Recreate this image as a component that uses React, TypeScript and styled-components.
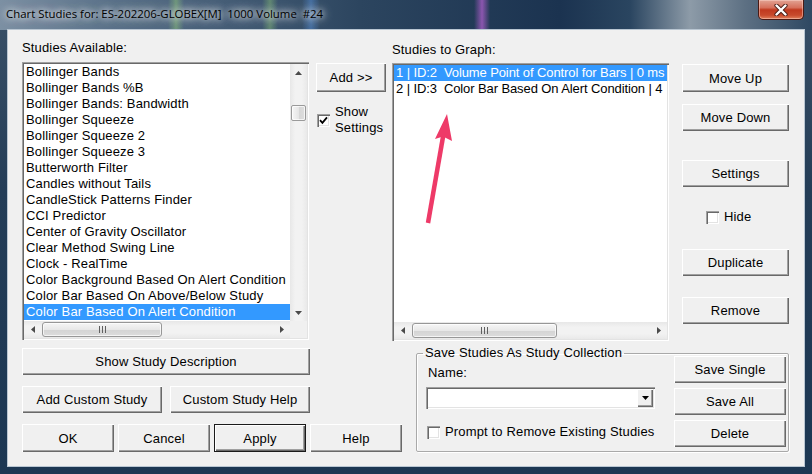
import React from 'react';
import styled, { createGlobalStyle } from 'styled-components';

const GlobalStyle = createGlobalStyle`
  html, body {
    margin: 0;
    padding: 0;
    background: #fff;
  }
  body {
    width: 812px;
    height: 474px;
    overflow: hidden;
    font-family: "Liberation Sans", Arial, sans-serif;
  }
`;

const available = [
  'Bollinger Bands',
  'Bollinger Bands %B',
  'Bollinger Bands: Bandwidth',
  'Bollinger Squeeze',
  'Bollinger Squeeze 2',
  'Bollinger Squeeze 3',
  'Butterworth Filter',
  'Candles without Tails',
  'CandleStick Patterns Finder',
  'CCI Predictor',
  'Center of Gravity Oscillator',
  'Clear Method Swing Line',
  'Clock - RealTime',
  'Color Background Based On Alert Condition',
  'Color Bar Based On Above/Below Study',
  'Color Bar Based On Alert Condition',
];

const toGraph = [
  '1 | ID:2  Volume Point of Control for Bars | 0 ms',
  '2 | ID:3  Color Bar Based On Alert Condition | 4',
];

const Window = styled.div`
  position: relative;
  width: 812px;
  height: 474px;
  display: flex;
  flex-direction: column;
  background: linear-gradient(180deg, #3a5168 0, #243d57 40%, #1c3753 100%);
  font-size: 13px;
  letter-spacing: 0.15px;
  color: #000;
`;

const TitleBar = styled.div`
  height: 30px;
  flex-shrink: 0;
  display: flex;
  justify-content: space-between;
  align-items: flex-start;
  padding: 0 8px 0 6px;
  box-sizing: border-box;
  background:
    linear-gradient(90deg, transparent 168px, rgba(150, 210, 120, 0.45) 176px, transparent 184px),
    linear-gradient(90deg, transparent 262px, rgba(150, 210, 120, 0.4) 270px, transparent 278px),
    linear-gradient(90deg, transparent 302px, rgba(90, 150, 230, 0.45) 311px, transparent 320px),
    linear-gradient(90deg, transparent 474px, rgba(175, 95, 205, 0.75) 482px, transparent 490px),
    linear-gradient(90deg, #7c90a3 0, #5a7189 110px, #2c455f 360px, #1b3350 560px, #2a4560 630px, #8d9ba8 690px, #5d7083 745px, #2e4862 812px);
`;

const TitleText = styled.span`
  margin-top: 6px;
  font-family: "Open Sans", "Noto Sans", sans-serif;
  font-size: 11.4px;
  letter-spacing: 0;
  line-height: 16px;
  color: #000;
  white-space: pre;
  text-shadow: 0 0 6px #fff, 0 0 10px rgba(255, 255, 255, 0.8), 0 0 14px rgba(255, 255, 255, 0.6);
`;

const CloseButton = styled.div`
  width: 46px;
  height: 20px;
  box-sizing: border-box;
  display: flex;
  align-items: center;
  justify-content: center;
  border: 1px solid #4b1a14;
  border-top: none;
  border-radius: 0 0 5px 5px;
  background: linear-gradient(180deg, #e2a394 0, #d6705c 40%, #c0391f 52%, #c84a2c 80%, #e0805c 100%);
  box-shadow: inset 0 0 0 1px rgba(255, 220, 210, 0.45);
`;

const Frame = styled.div`
  flex: 1;
  padding: 0 8px 8px 8px;
  display: flex;
`;

const Client = styled.div`
  flex: 1;
  display: flex;
  flex-direction: column;
  background: #f0f0f0;
  box-shadow: 0 0 0 1px #b9c6d2;
  padding: 10px 0 0 14px;
`;

const TopRow = styled.div`
  height: 300px;
  display: flex;
  align-items: flex-start;
`;

const Column = styled.div<{ $w: number; $ml?: number; $mt?: number }>`
  width: ${p => p.$w}px;
  margin-left: ${p => p.$ml ?? 0}px;
  margin-top: ${p => p.$mt ?? 0}px;
  display: flex;
  flex-direction: column;
  flex-shrink: 0;
`;

const Label = styled.div<{ $mb?: number; $mt?: number; $pl?: number }>`
  line-height: 16px;
  margin-top: ${p => p.$mt ?? 0}px;
  margin-bottom: ${p => p.$mb ?? 0}px;
  padding-left: ${p => p.$pl ?? 0}px;
  white-space: nowrap;
`;

const ListBox = styled.div<{ $w: number; $h: number; $vscroll?: boolean }>`
  box-sizing: border-box;
  width: ${p => p.$w}px;
  height: ${p => p.$h}px;
  padding: 2px;
  background: #fff;
  box-shadow: inset 1px 1px 0 #a0a0a0, inset 2px 2px 0 #696969, inset -1px -1px 0 #fff, inset -2px -2px 0 #e3e3e3;
  display: grid;
  grid-template-columns: ${p => (p.$vscroll ? '1fr 17px' : '1fr')};
  grid-template-rows: 1fr 17px;
`;

const Rows = styled.div<{ $tight?: boolean }>`
  overflow: hidden;
  min-width: 0;
  letter-spacing: ${p => (p.$tight ? '-0.1px' : '0.15px')};
`;

const Row = styled.div<{ $selected?: boolean }>`
  height: 16px;
  line-height: 16px;
  padding-left: 2px;
  white-space: pre;
  overflow: hidden;
  background: ${p => (p.$selected ? '#3399ff' : 'transparent')};
  color: ${p => (p.$selected ? '#fff' : '#000')};
`;

const VScroll = styled.div`
  display: flex;
  flex-direction: column;
  background: linear-gradient(90deg, #e7e7e7 0, #f2f2f2 30%, #f2f2f2 70%, #e9e9e9 100%);
`;

const HScroll = styled.div`
  display: flex;
  align-items: flex-start;
  background: linear-gradient(180deg, #e7e7e7 0, #f2f2f2 30%, #f2f2f2 70%, #e9e9e9 100%);
`;

const Corner = styled.div`
  background: #f0f0f0;
`;

const ArrowCell = styled.div<{ $end?: boolean }>`
  width: 17px;
  height: 17px;
  flex-shrink: 0;
  display: flex;
  align-items: center;
  justify-content: center;
  margin-left: ${p => (p.$end ? 'auto' : '0')};
  margin-top: ${p => (p.$end ? 'auto' : '0')};
`;

const VThumb = styled.div<{ $offset: number; $len: number }>`
  box-sizing: border-box;
  margin: ${p => p.$offset}px 0 0 1px;
  width: 15px;
  height: ${p => p.$len}px;
  border: 1px solid #9a9a9a;
  border-radius: 2px;
  background: linear-gradient(90deg, #f6f6f6 0, #e6e6e6 50%, #d6d6d6 51%, #dedede 100%);
  box-shadow: inset 0 0 0 1px rgba(255, 255, 255, 0.7);
`;

const HThumb = styled.div<{ $len: number; $offset: number }>`
  box-sizing: border-box;
  margin: 1px 0 0 ${p => p.$offset}px;
  width: ${p => p.$len}px;
  height: 15px;
  border: 1px solid #979797;
  border-radius: 3px;
  background: linear-gradient(180deg, #f6f6f6 0, #e8e8e8 50%, #d4d4d4 51%, #dcdcdc 100%);
  box-shadow: inset 0 0 0 1px rgba(255, 255, 255, 0.7);
  display: flex;
  align-items: center;
  justify-content: center;
`;

const Grip = styled.span`
  width: 7px;
  height: 7px;
  background: linear-gradient(90deg, #606060 0 1px, transparent 1px 3px, #606060 3px 4px, transparent 4px 6px, #606060 6px 7px);
`;

const Button = styled.button<{ $w: number; $h?: number; $mt?: number; $default?: boolean }>`
  box-sizing: border-box;
  width: ${p => p.$w}px;
  height: ${p => p.$h ?? 27}px;
  margin: ${p => p.$mt ?? 0}px 0 0 0;
  padding: 0;
  flex-shrink: 0;
  font-family: "Liberation Sans", Arial, sans-serif;
  font-size: 13px;
  letter-spacing: 0.15px;
  color: #000;
  background: #f0f0f0;
  border: ${p => (p.$default ? '1px solid #1a1a1a' : 'none')};
  box-shadow: inset 1px 1px 0 #fff, inset -1px -1px 0 #696969, inset -2px -2px 0 #a0a0a0;
`;

const ButtonRow = styled.div<{ $gap: number; $mt?: number }>`
  display: flex;
  gap: ${p => p.$gap}px;
  margin-top: ${p => p.$mt ?? 0}px;
`;

const CheckRow = styled.label<{ $mt?: number; $pl?: number }>`
  display: flex;
  align-items: center;
  gap: 5px;
  margin-top: ${p => p.$mt ?? 0}px;
  padding-left: ${p => p.$pl ?? 0}px;
  line-height: 16px;
  white-space: nowrap;
`;

const CheckBox = styled.span`
  box-sizing: border-box;
  width: 13px;
  height: 13px;
  flex-shrink: 0;
  background: #fff;
  box-shadow: inset 1px 1px 0 #a0a0a0, inset 2px 2px 0 #696969, inset -1px -1px 0 #fff, inset -2px -2px 0 #e3e3e3;
  display: flex;
  align-items: center;
  justify-content: center;
`;

const BottomRow = styled.div`
  display: flex;
  align-items: flex-start;
`;

const GroupBox = styled.fieldset`
  box-sizing: border-box;
  width: 373px;
  height: 107px;
  margin: 5px 0 0 14px;
  padding: 0;
  min-width: 0;
  border: 1px solid #a9a9a9;
  border-radius: 2px;
  box-shadow: 1px 1px 0 #fff, inset 1px 1px 0 #fff;
`;

const Legend = styled.legend`
  margin-left: 6px;
  padding: 0 2px;
  line-height: 16px;
`;

const GroupInner = styled.div`
  display: flex;
  padding-left: 9px;
`;

const Combo = styled.div`
  box-sizing: border-box;
  width: 229px;
  height: 22px;
  margin-top: 6px;
  padding: 2px;
  background: #fff;
  box-shadow: inset 1px 1px 0 #a0a0a0, inset 2px 2px 0 #696969, inset -1px -1px 0 #fff, inset -2px -2px 0 #e3e3e3;
  display: flex;
  justify-content: flex-end;
`;

const ComboButton = styled.div`
  box-sizing: border-box;
  width: 16px;
  height: 18px;
  background: #f0f0f0;
  box-shadow: inset 1px 1px 0 #fff, inset -1px -1px 0 #696969, inset -2px -2px 0 #a0a0a0;
  display: flex;
  align-items: center;
  justify-content: center;
`;

const ArrowOverlay = styled.svg`
  position: absolute;
  left: 0;
  top: 0;
  pointer-events: none;
`;

type Dir = 'up' | 'down' | 'left' | 'right';

const Tri = ({ dir, color = '#4a4a4a' }: { dir: Dir; color?: string }) => {
  const pts: Record<Dir, string> = {
    up: '0,4 3.5,0 7,4',
    down: '0,0 7,0 3.5,4',
    left: '4,0 4,7 0,3.5',
    right: '0,0 4,3.5 0,7',
  };
  const vertical = dir === 'up' || dir === 'down';
  return (
    <svg width={vertical ? 7 : 4} height={vertical ? 4 : 7}>
      <polygon points={pts[dir]} fill={color} />
    </svg>
  );
};

const Tick = () => (
  <svg width="9" height="9" viewBox="0 0 9 9">
    <polyline points="1,4.2 3.4,6.8 8,1.4" fill="none" stroke="#000" strokeWidth="1.8" />
  </svg>
);

const HBar = ({ thumb, offset = 0 }: { thumb: number; offset?: number }) => (
  <HScroll>
    <ArrowCell><Tri dir="left" /></ArrowCell>
    <HThumb $len={thumb} $offset={offset}><Grip /></HThumb>
    <ArrowCell $end><Tri dir="right" /></ArrowCell>
  </HScroll>
);

const App = () => (
  <>
    <GlobalStyle />
    <Window>
      <TitleBar>
        <TitleText>Chart Studies for: ES-202206-GLOBEX[M]  1000 Volume  #24</TitleText>
        <CloseButton>
          <svg width="14" height="12" viewBox="0 0 14 12">
            <path d="M2.5 1.5 L11.5 10.5 M11.5 1.5 L2.5 10.5" stroke="#4a1d16" strokeWidth="4.2" strokeLinecap="round" />
            <path d="M2.5 1.5 L11.5 10.5 M11.5 1.5 L2.5 10.5" stroke="#fff" strokeWidth="2.4" strokeLinecap="round" />
          </svg>
        </CloseButton>
      </TitleBar>
      <Frame>
        <Client>
          <TopRow>
            <Column $w={288}>
              <Label $mb={6}>Studies Available:</Label>
              <ListBox $w={287} $h={278} $vscroll>
                <Rows>
                  {available.map((name, i) => (
                    <Row key={name} $selected={i === available.length - 1}>{name}</Row>
                  ))}
                </Rows>
                <VScroll>
                  <ArrowCell><Tri dir="up" /></ArrowCell>
                  <VThumb $offset={24} $len={16} />
                  <ArrowCell $end><Tri dir="down" /></ArrowCell>
                </VScroll>
                <HBar thumb={120} offset={1} />
                <Corner />
              </ListBox>
            </Column>

            <Column $w={70} $ml={6} $mt={23}>
              <Button $w={70} $h={29}>Add &gt;&gt;</Button>
              <CheckRow $mt={12} $pl={1}>
                <CheckBox><Tick /></CheckBox>
                <span>Show<br />Settings</span>
              </CheckRow>
            </Column>

            <Column $w={277} $ml={6} $mt={2}>
              <Label $mb={5}>Studies to Graph:</Label>
              <ListBox $w={277} $h={278}>
                <Rows $tight>
                  {toGraph.map((s, i) => (
                    <Row key={s} $selected={i === 0}>{s}</Row>
                  ))}
                </Rows>
                <HBar thumb={145} offset={1} />
              </ListBox>
            </Column>

            <Column $w={107} $ml={13} $mt={24}>
              <Button $w={107} $h={28}>Move Up</Button>
              <Button $w={107} $mt={12}>Move Down</Button>
              <Button $w={107} $mt={29}>Settings</Button>
              <CheckRow $mt={22} $pl={24}>
                <CheckBox />
                <span>Hide</span>
              </CheckRow>
              <Button $w={107} $mt={24}>Duplicate</Button>
              <Button $w={107} $mt={21}>Remove</Button>
            </Column>
          </TopRow>

          <BottomRow>
            <Column $w={380} $mt={8}>
              <Button $w={288}>Show Study Description</Button>
              <ButtonRow $gap={8} $mt={11}>
                <Button $w={140}>Add Custom Study</Button>
                <Button $w={140}>Custom Study Help</Button>
              </ButtonRow>
              <ButtonRow $gap={4} $mt={11}>
                <Button $w={92} $h={28}>OK</Button>
                <Button $w={92} $h={28}>Cancel</Button>
                <Button $w={92} $h={28} $default>Apply</Button>
                <Button $w={92} $h={28}>Help</Button>
              </ButtonRow>
            </Column>

            <GroupBox>
              <Legend>Save Studies As Study Collection</Legend>
              <GroupInner>
                <Column $w={229}>
                  <Label $pl={2} $mt={4}>Name:</Label>
                  <Combo>
                    <ComboButton><Tri dir="down" color="#000" /></ComboButton>
                  </Combo>
                  <CheckRow $mt={15} $pl={1}>
                    <CheckBox />
                    <span>Prompt to Remove Existing Studies</span>
                  </CheckRow>
                </Column>
                <Column $w={112} $ml={19} $mt={-5}>
                  <Button $w={112}>Save Single</Button>
                  <Button $w={112} $mt={5}>Save All</Button>
                  <Button $w={112} $mt={5}>Delete</Button>
                </Column>
              </GroupInner>
            </GroupBox>
          </BottomRow>
        </Client>
      </Frame>

      <ArrowOverlay width="812" height="474" viewBox="0 0 812 474">
        <line x1="428" y1="223" x2="443.5" y2="134" stroke="#ee3a68" strokeWidth="4.5" />
        <polygon points="447,114 452,141 443,136.5 435,139" fill="#ee3a68" />
      </ArrowOverlay>
    </Window>
  </>
);

export default App;
